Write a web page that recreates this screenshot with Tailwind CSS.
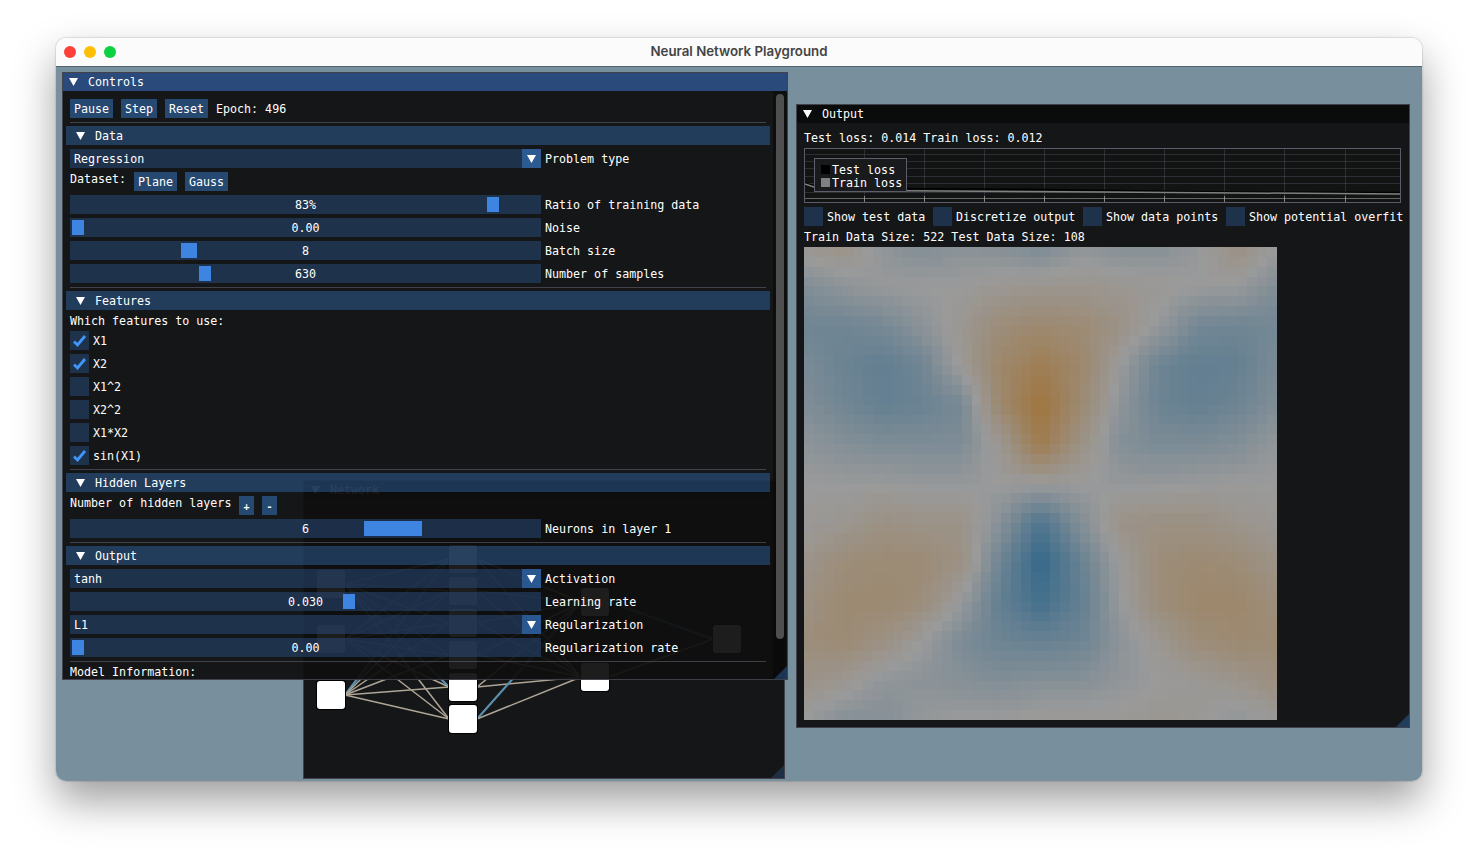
<!DOCTYPE html>
<html lang="en">
<head>
  <meta charset="UTF-8">
  <title>Neural Network Playground</title>
  <script src="https://cdn.jsdelivr.net/npm/@tailwindcss/browser@4"></script>
</head>
<body class="bg-white overflow-hidden font-['DejaVu_Sans_Mono',monospace] text-[11.66px] leading-none text-white">
  <div class="w-[1478px] h-[855px] pt-[38px] pl-[56px]">
    <!-- macOS window -->
    <div class="w-[1366px] h-[743px] flex flex-col rounded-[10px] overflow-hidden shadow-[0_20px_42px_rgba(0,0,0,0.38),0_0_2px_rgba(0,0,0,0.35)]">
      <div class="h-[29px] shrink-0 relative flex items-center justify-center bg-[#fbfbfb] border-b border-[#50646f]">
        <div class="absolute left-[8px] top-[8px] flex gap-[8px]">
          <div class="w-[12px] h-[12px] rounded-full bg-[#ff4038]"></div>
          <div class="w-[12px] h-[12px] rounded-full bg-[#fdc006]"></div>
          <div class="w-[12px] h-[12px] rounded-full bg-[#0cd140]"></div>
        </div>
        <span class="mb-[1px] font-['Inter',sans-serif] font-semibold text-[13.3px] text-[#444444]">Neural Network Playground</span>
      </div>

      <!-- desktop of floating panels -->
      <div class="relative flex-1 bg-[#788f9d] [&_span]:relative [&_span]:top-[1px] [&_button]:pt-[2px]">

        <!-- Network panel, sits behind Controls -->
        <div class="absolute left-[247px] top-[413px] w-[482px] h-[299px] bg-[#0f0f0f]/94 border border-[#6e6e80]/50">
          <div class="h-[18px] flex items-center bg-black/50 pl-[7px] gap-[10px]">
            <svg class="w-[9px] h-[8px]" viewBox="0 0 9 8"><polygon points="0,0 9,0 4.5,8" fill="#fff"/></svg>
            <span>Network</span>
          </div>
          <svg id="net" class="absolute left-0 top-0 w-[480px] h-[297px]" viewBox="304 481 480 297"></svg>
          <div class="absolute right-0 bottom-0 w-[13px] h-[13px] bg-[#4296fa]/20 [clip-path:polygon(100%_0,100%_100%,0_100%)]"></div>
        </div>

        <!-- Controls panel -->
        <div class="absolute left-[6px] top-[5px] w-[726px] h-[608px] flex flex-col bg-[#0f0f0f]/94 border border-[#6e6e80]/50 overflow-hidden">
          <div class="h-[18px] shrink-0 flex items-center bg-[#294a7a] pl-[6px] gap-[10px]">
            <svg class="w-[9px] h-[8px]" viewBox="0 0 9 8"><polygon points="0,0 9,0 4.5,8" fill="#fff"/></svg>
            <span>Controls</span>
          </div>
          <div class="flex-1 flex min-h-0 relative">
            <div class="w-[710px] pl-[7px] pr-[7px] pt-[8px] flex flex-col gap-[4px]">

              <div class="h-[19px] shrink-0 flex items-center gap-[8px]">
                <button class="h-[19px] w-[43px] bg-[#4296fa]/40">Pause</button>
                <button class="h-[19px] w-[36px] bg-[#4296fa]/40">Step</button>
                <button class="h-[19px] w-[43px] bg-[#4296fa]/40">Reset</button>
                <span>Epoch: 496</span>
              </div>
              <div class="h-px shrink-0 bg-[#6e6e80]/50 -mb-px"></div>

              <div class="h-[19px] shrink-0 -mx-[4px] flex items-center gap-[10px] pl-[10px] bg-[#4296fa]/30">
                <svg class="w-[9px] h-[8px]" viewBox="0 0 9 8"><polygon points="0,0 9,0 4.5,8" fill="#fff"/></svg>
                <span>Data</span>
              </div>
              <div class="h-[19px] shrink-0 flex items-center gap-[4px]">
                <div class="w-[471px] h-[19px] flex items-center justify-between pl-[4px] bg-[#294a7a]/54">
                  <span>Regression</span>
                  <div class="w-[19px] h-[19px] flex items-center justify-center bg-[#4296fa]/40"><svg class="w-[9px] h-[8px]" viewBox="0 0 9 8"><polygon points="0,0 9,0 4.5,8" fill="#fff"/></svg></div>
                </div>
                <span>Problem type</span>
              </div>
              <div class="h-[19px] shrink-0 flex items-start gap-[8px]">
                <span class="w-[56px] pt-[1px] whitespace-nowrap">Dataset:</span>
                <button class="h-[19px] w-[43px] bg-[#4296fa]/40">Plane</button>
                <button class="h-[19px] w-[43px] bg-[#4296fa]/40">Gauss</button>
              </div>
              <div class="h-[19px] shrink-0 flex items-center gap-[4px]">
                <div class="relative w-[471px] h-[19px] flex items-center justify-center bg-[#294a7a]/54"><span>83%</span><div class="absolute left-[417px] top-[2px] w-[12px] h-[15px] bg-[#3d85e0]"></div></div>
                <span>Ratio of training data</span>
              </div>
              <div class="h-[19px] shrink-0 flex items-center gap-[4px]">
                <div class="relative w-[471px] h-[19px] flex items-center justify-center bg-[#294a7a]/54"><span>0.00</span><div class="absolute left-[2px] top-[2px] w-[12px] h-[15px] bg-[#3d85e0]"></div></div>
                <span>Noise</span>
              </div>
              <div class="h-[19px] shrink-0 flex items-center gap-[4px]">
                <div class="relative w-[471px] h-[19px] flex items-center justify-center bg-[#294a7a]/54"><span>8</span><div class="absolute left-[111px] top-[2px] w-[16px] h-[15px] bg-[#3d85e0]"></div></div>
                <span>Batch size</span>
              </div>
              <div class="h-[19px] shrink-0 flex items-center gap-[4px]">
                <div class="relative w-[471px] h-[19px] flex items-center justify-center bg-[#294a7a]/54"><span>630</span><div class="absolute left-[129px] top-[2px] w-[12px] h-[15px] bg-[#3d85e0]"></div></div>
                <span>Number of samples</span>
              </div>
              <div class="h-px shrink-0 bg-[#6e6e80]/50 -mb-px"></div>

              <div class="h-[19px] shrink-0 -mx-[4px] flex items-center gap-[10px] pl-[10px] bg-[#4296fa]/30">
                <svg class="w-[9px] h-[8px]" viewBox="0 0 9 8"><polygon points="0,0 9,0 4.5,8" fill="#fff"/></svg>
                <span>Features</span>
              </div>
              <div class="h-[13px] shrink-0 flex items-center"><span>Which features to use:</span></div>
              <div class="h-[19px] shrink-0 flex items-center gap-[4px]">
                <div class="w-[19px] h-[19px] bg-[#294a7a]/54"><svg class="w-[19px] h-[19px]" viewBox="0 0 19 19"><path d="M4 10.5l3.5 3.5 7.5-9" fill="none" stroke="#4296fa" stroke-width="2.8"/></svg></div>
                <span>X1</span>
              </div>
              <div class="h-[19px] shrink-0 flex items-center gap-[4px]">
                <div class="w-[19px] h-[19px] bg-[#294a7a]/54"><svg class="w-[19px] h-[19px]" viewBox="0 0 19 19"><path d="M4 10.5l3.5 3.5 7.5-9" fill="none" stroke="#4296fa" stroke-width="2.8"/></svg></div>
                <span>X2</span>
              </div>
              <div class="h-[19px] shrink-0 flex items-center gap-[4px]">
                <div class="w-[19px] h-[19px] bg-[#294a7a]/54"></div>
                <span>X1^2</span>
              </div>
              <div class="h-[19px] shrink-0 flex items-center gap-[4px]">
                <div class="w-[19px] h-[19px] bg-[#294a7a]/54"></div>
                <span>X2^2</span>
              </div>
              <div class="h-[19px] shrink-0 flex items-center gap-[4px]">
                <div class="w-[19px] h-[19px] bg-[#294a7a]/54"></div>
                <span>X1*X2</span>
              </div>
              <div class="h-[19px] shrink-0 flex items-center gap-[4px]">
                <div class="w-[19px] h-[19px] bg-[#294a7a]/54"><svg class="w-[19px] h-[19px]" viewBox="0 0 19 19"><path d="M4 10.5l3.5 3.5 7.5-9" fill="none" stroke="#4296fa" stroke-width="2.8"/></svg></div>
                <span>sin(X1)</span>
              </div>
              <div class="h-px shrink-0 bg-[#6e6e80]/50 -mb-px"></div>

              <div class="h-[19px] shrink-0 -mx-[4px] flex items-center gap-[10px] pl-[10px] bg-[#4296fa]/30">
                <svg class="w-[9px] h-[8px]" viewBox="0 0 9 8"><polygon points="0,0 9,0 4.5,8" fill="#fff"/></svg>
                <span>Hidden Layers</span>
              </div>
              <div class="h-[19px] shrink-0 flex items-start gap-[8px]">
                <span class="w-[161px] pt-[1px] whitespace-nowrap">Number of hidden layers</span>
                <button class="h-[19px] w-[15px] bg-[#4296fa]/40 text-[10px] font-bold">+</button>
                <button class="h-[19px] w-[15px] bg-[#4296fa]/40 text-[10px] font-bold">-</button>
              </div>
              <div class="h-[19px] shrink-0 flex items-center gap-[4px]">
                <div class="relative w-[471px] h-[19px] flex items-center justify-center bg-[#294a7a]/54"><span>6</span><div class="absolute left-[294px] top-[2px] w-[58px] h-[15px] bg-[#3d85e0]"></div></div>
                <span>Neurons in layer 1</span>
              </div>
              <div class="h-px shrink-0 bg-[#6e6e80]/50 -mb-px"></div>

              <div class="h-[19px] shrink-0 -mx-[4px] flex items-center gap-[10px] pl-[10px] bg-[#4296fa]/30">
                <svg class="w-[9px] h-[8px]" viewBox="0 0 9 8"><polygon points="0,0 9,0 4.5,8" fill="#fff"/></svg>
                <span>Output</span>
              </div>
              <div class="h-[19px] shrink-0 flex items-center gap-[4px]">
                <div class="w-[471px] h-[19px] flex items-center justify-between pl-[4px] bg-[#294a7a]/54">
                  <span>tanh</span>
                  <div class="w-[19px] h-[19px] flex items-center justify-center bg-[#4296fa]/40"><svg class="w-[9px] h-[8px]" viewBox="0 0 9 8"><polygon points="0,0 9,0 4.5,8" fill="#fff"/></svg></div>
                </div>
                <span>Activation</span>
              </div>
              <div class="h-[19px] shrink-0 flex items-center gap-[4px]">
                <div class="relative w-[471px] h-[19px] flex items-center justify-center bg-[#294a7a]/54"><span>0.030</span><div class="absolute left-[273px] top-[2px] w-[12px] h-[15px] bg-[#3d85e0]"></div></div>
                <span>Learning rate</span>
              </div>
              <div class="h-[19px] shrink-0 flex items-center gap-[4px]">
                <div class="w-[471px] h-[19px] flex items-center justify-between pl-[4px] bg-[#294a7a]/54">
                  <span>L1</span>
                  <div class="w-[19px] h-[19px] flex items-center justify-center bg-[#4296fa]/40"><svg class="w-[9px] h-[8px]" viewBox="0 0 9 8"><polygon points="0,0 9,0 4.5,8" fill="#fff"/></svg></div>
                </div>
                <span>Regularization</span>
              </div>
              <div class="h-[19px] shrink-0 flex items-center gap-[4px]">
                <div class="relative w-[471px] h-[19px] flex items-center justify-center bg-[#294a7a]/54"><span>0.00</span><div class="absolute left-[2px] top-[2px] w-[12px] h-[15px] bg-[#3d85e0]"></div></div>
                <span>Regularization rate</span>
              </div>
              <div class="h-px shrink-0 bg-[#6e6e80]/50 -mb-px"></div>
              <div class="h-[13px] shrink-0 flex items-center pt-[1px]"><span>Model Information:</span></div>
            </div>

            <!-- scrollbar -->
            <div class="w-[14px] bg-[#050505]/50 pt-[3px] pl-[3px]">
              <div class="w-[8px] h-[545px] rounded-full bg-[#4f4f4f]"></div>
            </div>
            <div class="absolute right-0 bottom-0 w-[13px] h-[13px] bg-[#4296fa]/30 [clip-path:polygon(100%_0,100%_100%,0_100%)]"></div>
          </div>
        </div>

        <!-- Output panel -->
        <div class="absolute left-[740px] top-[37px] w-[614px] h-[624px] flex flex-col bg-[#0f0f0f]/94 border border-[#6e6e80]/50">
          <div class="h-[18px] shrink-0 flex items-center bg-black/50 pl-[6px] gap-[10px]">
            <svg class="w-[9px] h-[8px]" viewBox="0 0 9 8"><polygon points="0,0 9,0 4.5,8" fill="#fff"/></svg>
            <span>Output</span>
          </div>
          <div class="pl-[7px] pt-[8px] flex flex-col">
            <div class="h-[13px] flex items-center"><span>Test loss: 0.014 Train loss: 0.012</span></div>

            <div class="relative mt-[4px] w-[597px] h-[55px] border border-[#6e6e80]/80 bg-[#0f0f0f]/40">
              <svg class="absolute left-0 top-0 w-[595px] h-[53px]" viewBox="0 0 595 53">
                <g stroke="#6e6e80" stroke-opacity="0.3">
                  <path d="M59.5 0V53M119.5 0V53M179.5 0V53M239.5 0V53M299.5 0V53M359.5 0V53M419.5 0V53M479.5 0V53M540.5 0V53"/>
                  <path d="M0 5.5H595M0 12.5H595M0 19.5H595M0 27.5H595M0 34.5H595M0 43.5H595"/>
                </g>
                <path d="M0 49.5H595" stroke="#8a8a8a" stroke-opacity="0.7"/>
                <path d="M59.5 47V53M119.5 47V53M179.5 47V53M239.5 47V53M299.5 47V53M359.5 47V53M419.5 47V53M479.5 47V53M540.5 47V53" stroke="#aaaaaa" stroke-opacity="0.7"/>
                <path d="M0 34 L12 38 L60 39.5 L240 40.5 L415 43 L595 43.5" fill="none" stroke="#000000" stroke-width="1.5"/>
                <path d="M0 35 L12 39 L60 41.5 L300 43 L595 45" fill="none" stroke="#808080" stroke-width="1.5"/>
              </svg>
              <div class="absolute left-[9px] top-[9px] w-[93px] h-[34px] flex flex-col gap-[4px] pt-[6px] pl-[6px] bg-[#191a1c] border border-[#6e6e80]/80">
                <div class="flex items-center gap-[2px] h-[9px]"><div class="w-[9px] h-[9px] bg-black"></div><span>Test loss</span></div>
                <div class="flex items-center gap-[2px] h-[9px]"><div class="w-[9px] h-[9px] bg-[#808080]"></div><span>Train loss</span></div>
              </div>
            </div>

            <div class="mt-[4px] h-[19px] flex items-center">
              <div class="w-[19px] h-[19px] bg-[#294a7a]/54"></div>
              <span class="ml-[4px] w-[106px]">Show test data</span>
              <div class="w-[19px] h-[19px] bg-[#294a7a]/54"></div>
              <span class="ml-[4px] w-[127px]">Discretize output</span>
              <div class="w-[19px] h-[19px] bg-[#294a7a]/54"></div>
              <span class="ml-[4px] w-[120px]">Show data points</span>
              <div class="w-[19px] h-[19px] bg-[#294a7a]/54"></div>
              <span class="ml-[4px] whitespace-nowrap">Show potential overfit</span>
            </div>
            <div class="mt-[4px] h-[13px] flex items-center"><span>Train Data Size: 522 Test Data Size: 108</span></div>
            <canvas id="heat" width="473" height="473" class="mt-[4px] w-[473px] h-[473px]"></canvas>
          </div>
          <div class="absolute right-0 bottom-0 w-[13px] h-[13px] bg-[#4296fa]/30 [clip-path:polygon(100%_0,100%_100%,0_100%)]"></div>
        </div>
      </div>
    </div>
  </div>

  <script>
    // model output sampled on a coarse grid, blue is positive and orange negative
    const samples = [
      [-.1,-.2,.1,.25,.15,.2,.3,.1,.2,.2,.05,-.25,0],
      [.25,.12,.02,0,0,-.08,-.12,-.12,-.1,-.05,0,.02,.25],
      [.42,.42,.35,.15,-.1,-.36,-.45,-.4,-.22,.05,.38,.42,.38],
      [.32,.46,.55,.42,-.05,-.52,-.75,-.52,0,.44,.55,.52,.32],
      [.25,.4,.52,.47,.35,-.5,-1,-.45,.12,.45,.52,.44,.25],
      [.12,.22,.28,.28,.28,-.1,-.82,-.25,.22,.3,.3,.24,.08],
      [0,.02,.02,.05,.05,0,0,0,.05,.05,.02,0,0],
      [-.02,-.1,-.25,-.2,-.2,.2,.75,.25,-.2,-.25,-.25,-.15,-.05],
      [-.15,-.35,-.4,-.4,-.25,.45,1,.5,0,-.35,-.42,-.38,-.2],
      [-.25,-.42,-.45,-.35,.05,.55,.85,.55,.05,-.35,-.5,-.5,-.32],
      [-.32,-.42,-.25,0,.3,.45,.5,.45,.15,-.1,-.35,-.45,-.4],
      [-.2,-.1,.1,.15,.2,.25,.2,.2,.1,0,-.05,-.15,-.3],
      [0,.2,.2,.05,0,0,-.05,-.05,-.05,-.1,-.05,.1,-.05]
    ];
    const neutral = [154,154,154], blue = [52,104,138], orange = [160,117,62];

    function sample(u, v) {
      const x = Math.min(u * 12, 11.999), y = Math.min(v * 12, 11.999);
      const i = Math.floor(x), j = Math.floor(y), fx = x - i, fy = y - j;
      return (samples[j][i] * (1 - fx) + samples[j][i + 1] * fx) * (1 - fy)
        + (samples[j + 1][i] * (1 - fx) + samples[j + 1][i + 1] * fx) * fy;
    }

    const ctx = document.getElementById('heat').getContext('2d');
    const cells = 48, size = 473 / cells;
    for (let r = 0; r < cells; r++) {
      for (let c = 0; c < cells; c++) {
        const val = sample((c + .5) / cells, (r + .5) / cells);
        const to = val > 0 ? blue : orange, t = Math.abs(val);
        const rgb = neutral.map((n, k) => Math.round(n + (to[k] - n) * t));
        ctx.fillStyle = `rgb(${rgb.join(',')})`;
        const x0 = Math.round(c * size), y0 = Math.round(r * size);
        ctx.fillRect(x0, y0, Math.round((c + 1) * size) - x0, Math.round((r + 1) * size) - y0);
      }
    }

    // network diagram, coordinates are page pixels
    const net = document.getElementById('net');
    const layers = [
      { x: 317, ys: [570, 625, 681] },
      { x: 449, ys: [545, 577, 609, 641, 673, 705] },
      { x: 581, ys: [588, 663] },
      { x: 713, ys: [625] }
    ];
    const blueLinks = ['0-0-4', '1-5-0', '2-0-0', '0-2-0'];

    function add(tag, attrs) {
      const el = document.createElementNS('http://www.w3.org/2000/svg', tag);
      Object.keys(attrs).forEach(k => el.setAttribute(k, attrs[k]));
      net.appendChild(el);
    }

    layers.slice(0, 3).forEach((layer, l) => {
      const next = layers[l + 1];
      layer.ys.forEach((y, a) => next.ys.forEach((ny, b) => {
        const isBlue = blueLinks.includes(l + '-' + a + '-' + b);
        add('line', {
          x1: layer.x + 28, y1: y + 14, x2: next.x, y2: ny + 14,
          stroke: isBlue ? '#5b8fb0' : '#ada596', 'stroke-width': isBlue ? 2.2 : 1.5
        });
      }));
    });

    layers.forEach(layer => layer.ys.forEach(y => {
      add('rect', { x: layer.x - 1, y: y - 1, width: 30, height: 30, rx: 3, fill: '#000' });
      add('rect', { x: layer.x, y: y, width: 28, height: 28, rx: 3, fill: '#fff' });
    }));
  </script>
</body>
</html>
